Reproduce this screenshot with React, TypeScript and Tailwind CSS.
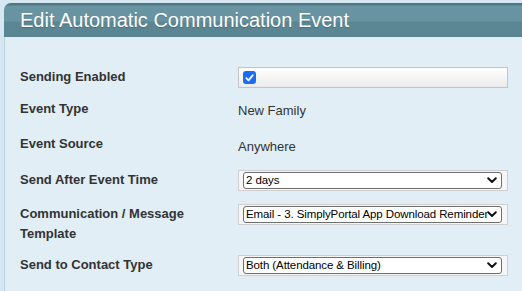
import React from "react";

const Chevron = () => (
  <svg width="10" height="7" viewBox="0 0 10 7" className="shrink-0">
    <path d="M1.2 1.3 L5 5 L8.8 1.3" fill="none" stroke="#111" strokeWidth="2" strokeLinecap="round" strokeLinejoin="round" />
  </svg>
);

const Select = ({ text }: { text: string }) => (
  <div className="w-[270px] h-[21px] border border-[#cfcfcf] bg-[#f6f6f6] flex items-center pl-[4px] pr-[5px]">
    <div className="flex-1 h-[17px] border border-[#6e6e6e] rounded-[3px] bg-white flex items-center pl-[2px] pr-[4px] overflow-hidden">
      <span
        className="flex-1 whitespace-nowrap overflow-hidden text-[11.5px] tracking-[-0.1px] text-black leading-[15px]"
        style={{ fontFamily: '"Liberation Sans", Arial, sans-serif', textOverflow: "clip" }}
      >
        {text}
      </span>
      <Chevron />
    </div>
  </div>
);

const Label = ({ children }: { children: React.ReactNode }) => (
  <div className="w-[233px] shrink-0 pl-[15px] pr-[20px] font-bold text-[13px] leading-[20px] text-[#333]">{children}</div>
);

export default function App() {
  return (
    <div
      className="w-[522px] h-[291px] bg-[#d6e7f1] pt-[3px] pl-[4px] overflow-hidden"
      style={{ fontFamily: '"Liberation Sans", Arial, Helvetica, sans-serif' }}
    >
      <div className="h-full bg-[#e1eef6] border-l border-[#b9d2df] rounded-tl-[7px]">
        <div className="h-[34px] rounded-tl-[7px] -ml-px bg-[linear-gradient(to_bottom,#4b7482_0px,#4f7a88_2px,#6994a1_3px,#6893a0_18px,#5b8794_19px,#5a8693_33px,#577f8c_34px)] flex items-center pl-[16px]">
          <span className="text-white text-[20px] leading-[24px]" style={{ textShadow: "0 1px 1px rgba(0,0,0,0.2)" }}>
            Edit Automatic Communication Event
          </span>
        </div>
        <div className="flex flex-col">
          <div className="flex items-start mt-[30px]">
            <Label>Sending Enabled</Label>
            <div className="w-[270px] h-[21px] border border-[#c4c4c4] bg-[linear-gradient(to_bottom,#ffffff,#ebebeb)] flex items-center pl-[4px]">
              <div className="w-[13px] h-[13px] rounded-[3px] bg-[#1a6cf5] flex items-center justify-center">
                <svg width="9" height="8" viewBox="0 0 9 8">
                  <path d="M1.3 4.2 L3.5 6.3 L7.7 1.3" fill="none" stroke="#fff" strokeWidth="1.8" strokeLinecap="round" strokeLinejoin="round" />
                </svg>
              </div>
            </div>
          </div>
          <div className="flex items-start mt-[11px]">
            <Label>Event Type</Label>
            <div className="pt-[2px] text-[13px] leading-[20px] text-[#333]">New Family</div>
          </div>
          <div className="flex items-start mt-[13px]">
            <Label>Event Source</Label>
            <div className="pt-[3px] text-[13px] leading-[20px] text-[#333]">Anywhere</div>
          </div>
          <div className="flex items-start mt-[13px]">
            <Label>Send After Event Time</Label>
            <Select text="2 days" />
          </div>
          <div className="flex items-start mt-[13px]">
            <Label>Communication / Message Template</Label>
            <Select text="Email - 3. SimplyPortal App Download Reminder (New Family)" />
          </div>
          <div className="flex items-start mt-[11px]">
            <Label>Send to Contact Type</Label>
            <Select text="Both (Attendance & Billing)" />
          </div>
        </div>
      </div>
    </div>
  );
}
